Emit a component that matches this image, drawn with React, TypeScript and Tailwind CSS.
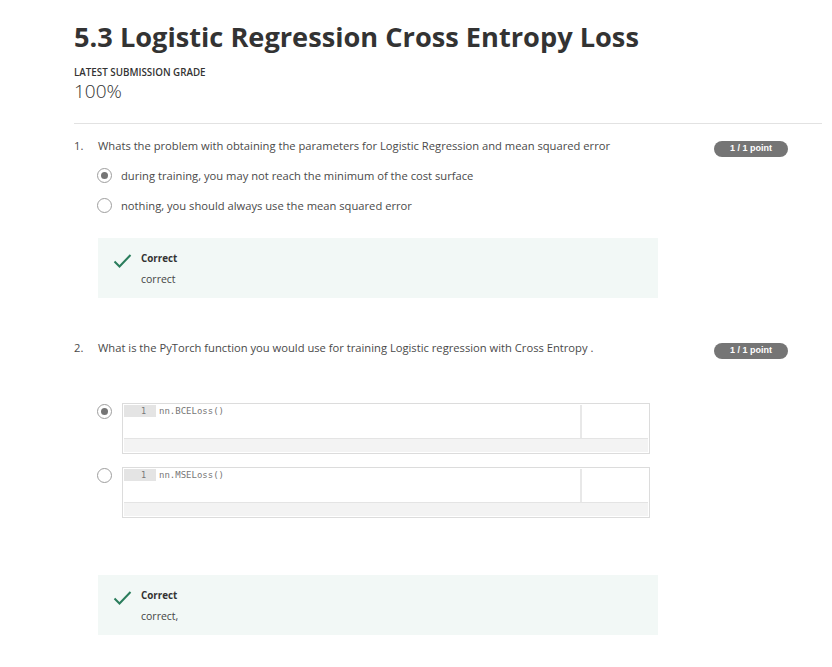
import React from 'react';

const font = { fontFamily: '"Open Sans", "Noto Sans", sans-serif' };
const mono = { fontFamily: '"DejaVu Sans Mono", monospace' };

function Badge() {
  return (
    <span
      className="mt-[3px] inline-flex h-[16px] w-[74px] items-center justify-center rounded-full bg-[#757575] text-[9px] font-bold text-white"
      style={{ fontFamily: '"Liberation Sans", Arial, sans-serif' }}
    >
      1 / 1 point
    </span>
  );
}

function Radio({ checked }: { checked?: boolean }) {
  return (
    <span className="flex h-[15px] w-[15px] shrink-0 items-center justify-center rounded-full border border-[#9e9e9e] bg-white">
      {checked && <span className="h-[7px] w-[7px] rounded-full bg-[#757575]" />}
    </span>
  );
}

function Check() {
  return (
    <svg width="19" height="16" viewBox="0 0 19 16" className="shrink-0">
      <path d="M1.5 8.5 L6.5 13.5 L17.5 2" fill="none" stroke="#2a7d5c" strokeWidth="2" />
    </svg>
  );
}

function Feedback({ text }: { text: string }) {
  return (
    <div className="flex h-[60px] w-[560px] gap-[9px] bg-[#f2f8f6] pl-[15px] pt-[15px]">
      <Check />
      <div className="text-[#333]">
        <div className="text-[9.8px] font-bold leading-[12px]">Correct</div>
        <div className="mt-[7px] text-[10.5px] leading-[14px] text-[#444]">{text}</div>
      </div>
    </div>
  );
}

function CodeOption({ checked, code }: { checked?: boolean; code: string }) {
  return (
    <div className="flex items-start gap-[10px]">
      <div className="pt-[1px]">
        <Radio checked={checked} />
      </div>
      <div className="w-[528px] border border-[#dcdcdc] bg-white p-[1px]">
        <div className="flex h-[33px]">
          <div className="flex h-[12px] w-[32px] items-center justify-end bg-[#e4e4e4] pr-[10px] text-[8.5px] text-[#777]" style={mono}>
            1
          </div>
          <div className="flex-1 pl-[3px] text-[9px] leading-[12px] text-[#777]" style={mono}>
            {code}
          </div>
          <div className="w-[68px] border-l-2 border-[#e8e8e8]" />
        </div>
        <div className="h-[14px] border-t border-[#e4e4e4] bg-[#f3f3f3]" />
      </div>
    </div>
  );
}

export default function App() {
  return (
    <div className="min-h-screen bg-white text-[#333]" style={font}>
      <div className="pl-[74px] pr-[10px] pt-[18px]">
        <h1 className="text-[27.2px] font-bold leading-[38px] text-[#333]">5.3 Logistic Regression Cross Entropy Loss</h1>
        <div className="mt-[10px] text-[9.8px] font-semibold leading-[13px] uppercase text-[#333]">Latest Submission Grade</div>
        <div className="text-[19px] font-light leading-[25px]">100%</div>
        <div className="mt-[19px] border-t border-[#e2e2e2]" />

        <div className="pr-[34px] pt-[14px]">
          <div className="flex items-start justify-between">
            <div className="flex text-[11.2px] leading-[16px] text-[#4a4a4a]">
              <span className="w-[24px]">1.</span>
              <span>Whats the problem with obtaining the parameters for Logistic Regression and mean squared error</span>
            </div>
            <Badge />
          </div>
          <div className="ml-[23px] mt-[11px] flex flex-col gap-[15px] text-[#4a4a4a]">
            <label className="flex items-center gap-[9px] text-[11.2px] leading-[15px]">
              <Radio checked />
              during training, you may not reach the minimum of the cost surface
            </label>
            <label className="flex items-center gap-[9px] text-[11.2px] leading-[15px]">
              <Radio />
              nothing, you should always use the mean squared error
            </label>
          </div>
          <div className="ml-[24px] mt-[25px]">
            <Feedback text="correct" />
          </div>

          <div className="mt-[42px] flex items-start justify-between">
            <div className="flex text-[11.2px] leading-[16px] text-[#4a4a4a]">
              <span className="w-[24px]">2.</span>
              <span>What is the PyTorch function you would use for training Logistic regression with Cross Entropy .</span>
            </div>
            <Badge />
          </div>
          <div className="ml-[23px] mt-[44px] flex flex-col gap-[13px]">
            <CodeOption checked code="nn.BCELoss()" />
            <CodeOption code="nn.MSELoss()" />
          </div>
          <div className="ml-[24px] mt-[57px]">
            <Feedback text="correct," />
          </div>
        </div>
      </div>
    </div>
  );
}
